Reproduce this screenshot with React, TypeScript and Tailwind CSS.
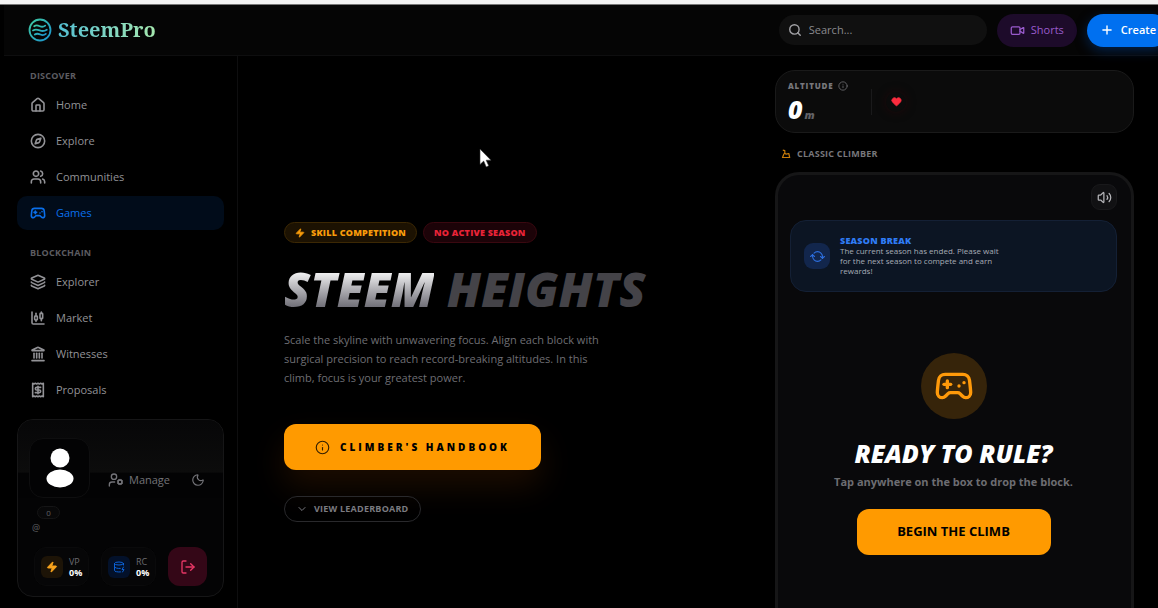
import React from "react";
import {
  House, Compass, Users, Gamepad2, Layers, ChartCandlestick, Landmark, Receipt,
  Search, Video, Plus, Info, Heart, Volume2, RefreshCcw, Zap, ChevronDown,
  UserCog, Moon, DatabaseZap, LogOut, type LucideIcon,
} from "lucide-react";

type Item = { label: string; icon: LucideIcon; active?: boolean };

const discover: Item[] = [
  { label: "Home", icon: House },
  { label: "Explore", icon: Compass },
  { label: "Communities", icon: Users },
  { label: "Games", icon: Gamepad2, active: true },
];

const blockchain: Item[] = [
  { label: "Explorer", icon: Layers },
  { label: "Market", icon: ChartCandlestick },
  { label: "Witnesses", icon: Landmark },
  { label: "Proposals", icon: Receipt },
];

function NavGroup({ title, items }: { title: string; items: Item[] }) {
  return (
    <section>
      <h2 className="px-[13px] text-[9px] font-bold leading-3 tracking-wide text-[#5c5c60]">{title}</h2>
      <ul className="mt-[6px] flex flex-col gap-[2px]">
        {items.map(({ label, icon: Icon, active }) => (
          <li key={label}>
            <a
              href="#"
              className={`flex h-[34px] items-center gap-[10px] rounded-[10px] px-[13px] text-[11px] font-medium ${active ? "bg-[#010c1a] text-[#0a6fea]" : "text-[#929296]"}`}
            >
              <Icon size={16} strokeWidth={2.4} />
              {label}
            </a>
          </li>
        ))}
      </ul>
    </section>
  );
}

function Logo() {
  return (
    <a href="#" className="flex items-center gap-[6px]">
      <svg width="24" height="24" viewBox="0 0 24 24" fill="none" strokeWidth="1.8" strokeLinecap="round" aria-hidden="true">
        <defs>
          <linearGradient id="mark" x1="0" y1="0" x2="1" y2="1">
            <stop offset="0" stopColor="#3fc9a0" />
            <stop offset="1" stopColor="#1b93d0" />
          </linearGradient>
        </defs>
        <g stroke="url(#mark)">
          <circle cx="12" cy="12" r="10.5" />
          <path d="M6.200 8.200c2.200-1.500 3.800-.8 5.600 0s3.600.9 5.400-.6M5 12.400c2.500-1.600 4.500-.9 6.700 0s4.700.9 7.100-.7M6.800 16.500c2.200-1.500 3.800-.8 5.600 0s3.600.9 5.400-.6" />
        </g>
      </svg>
      <span className="bg-gradient-to-r from-[#52bfd2] to-[#a5e8ae] bg-clip-text font-['Noto_Serif','Liberation_Serif',serif] text-[20px] font-bold leading-7 text-transparent">
        SteemPro
      </span>
    </a>
  );
}

function Stat({ label, icon, tint }: { label: string; icon: React.ReactNode; tint: string }) {
  return (
    <div className="flex h-[39px] items-center gap-[6px] rounded-xl border border-[#0a0a0b] bg-[#060607] px-[6px]">
      <span className={`flex size-[22px] items-center justify-center rounded-md ${tint}`}>{icon}</span>
      <span className="flex flex-col text-[9px] leading-[11px]">
        <span className="text-[#6b6b70]">{label}</span>
        <b className="text-white">0%</b>
      </span>
    </div>
  );
}

function UserCard() {
  return (
    <section className="mt-3 overflow-hidden rounded-[16px] border border-[#161617] bg-[#040405]">
      <div className="flex h-[78px] items-end bg-linear-to-b from-[#070708] from-0% via-[#0c0c0c] via-67% to-[#030304] to-68% px-[11px]">
        <div className="flex h-[60px] w-[61px] items-center justify-center rounded-[14px] border border-[#0e0e0f] bg-[#030304]">
          <svg width="28" height="40" viewBox="0 0 28 40" fill="white" aria-label="Avatar">
            <circle cx="14" cy="10" r="9.500" />
            <ellipse cx="14" cy="30.500" rx="13.500" ry="9" />
          </svg>
        </div>
        <div className="flex flex-1 items-center justify-between pb-[10px] pl-[18px] pr-[7px] text-[#737378]">
          <button className="flex items-center gap-[5px] text-[11px] leading-4"><UserCog size={16} />Manage</button>
          <button aria-label="Dark mode"><Moon size={14} /></button>
        </div>
      </div>
      <div className="px-[14px] pt-[8px] text-[9px] text-[#606064]">
        <span className="ml-[5px] flex h-[13px] w-[23px] items-center justify-center rounded-full border border-[#151516] bg-[#080809] text-[8px]">0</span>
        <span className="mt-[3px] block leading-3">@</span>
      </div>
      <div className="mb-[10px] mt-[13px] flex items-center justify-between px-[16px]">
        <Stat label="VP" tint="bg-[#1d1407] text-[#f6a21c]" icon={<Zap size={12} fill="currentColor" />} />
        <Stat label="RC" tint="bg-[#03112a] text-[#0c62d8]" icon={<DatabaseZap size={12} />} />
        <button aria-label="Log out" className="flex size-[39px] items-center justify-center rounded-xl bg-[#340717] text-[#e83766]"><LogOut size={16} /></button>
      </div>
    </section>
  );
}

function Header() {
  return (
    <header className="flex h-[51px] items-center justify-between border-b border-[#0e0e0f] bg-[#050505] pl-6">
      <Logo />
      <div className="-mr-[11px] flex shrink-0 items-center gap-[10px]">
        <label className="flex h-[30px] w-[208px] items-center gap-[7px] rounded-full bg-[#101010] px-[9px] text-[#a2a2a6]">
          <Search size={14} strokeWidth={2.400} className="shrink-0" />
          <input aria-label="Search" placeholder="Search..." className="w-full bg-transparent text-[11px] outline-none placeholder:text-[#8a8a8e]" />
        </label>
        <button className="flex h-[33px] items-center gap-[6px] rounded-full bg-[#1d0b2a] px-[13px] text-[11px] font-medium text-[#9a5bcd]"><Video size={15} />Shorts</button>
        <button className="flex h-[33px] items-center gap-[7px] rounded-full bg-[#0070f0] px-[13px] text-[11px] font-semibold text-white shadow-[0_4px_12px_#00337599]"><Plus size={14} strokeWidth={2.400} />Create</button>
      </div>
    </header>
  );
}

function Hero() {
  return (
    <main className="flex flex-1 flex-col items-start pl-[46px] pt-[166px]">
      <div className="flex gap-[6px] text-[9px] font-extrabold tracking-wide">
        <span className="flex h-[21px] items-center gap-[6px] rounded-full border border-[#3c2804] bg-[#1c1202] px-[10px] text-[#f99c0b]"><Zap size={10} fill="currentColor" />SKILL COMPETITION</span>
        <span className="flex h-[21px] items-center rounded-full border border-[#3a0810] bg-[#1c0308] px-[10px] text-[#ea2438]">NO ACTIVE SEASON</span>
      </div>
      <h1 className="mt-[19px] whitespace-nowrap text-5xl font-black italic leading-[54px] text-[#444348]">
        <span className="bg-gradient-to-b from-white from-20% to-[#62616a] to-85% bg-clip-text text-transparent">STEEM</span>{" "}
        <span>HEIGHTS</span>
      </h1>
      <p className="mt-[14px] max-w-[325px] text-[11px] leading-[19px] text-[#6e6e73]">
        Scale the skyline with unwavering focus. Align each block with surgical precision to reach record-breaking altitudes. In this climb, focus is your greatest power.
      </p>
      <button className="mt-[37px] flex h-[46px] w-[257px] items-center justify-center gap-[10px] rounded-xl bg-[#ff9a00] text-[10px] font-black tracking-[3px] text-black shadow-[0_16px_32px_#3a1a0080]">
        <Info size={15} strokeWidth={1.800} className="opacity-80" />CLIMBER&apos;S HANDBOOK
      </button>
      <button className="mt-[26px] flex h-[26px] items-center gap-[6px] rounded-full border border-[#29292c] px-[11px] text-[9px] font-bold tracking-wide text-[#7b7b80]">
        <ChevronDown size={12} />VIEW LEADERBOARD
      </button>
    </main>
  );
}

function GamePanel() {
  return (
    <aside className="mr-[24px] flex w-[359px] shrink-0 flex-col pt-[14px]">
      <section className="flex h-[63px] items-center rounded-[20px] border border-[#1a1a1a] bg-[#0b0b0b] pl-[12px]">
        <div className="flex h-full w-[83px] flex-col pt-[9px]">
          <div className="flex items-center gap-[5px] text-[8px] font-extrabold leading-3 tracking-widest text-[#77777b]">ALTITUDE<Info size={10} strokeWidth={1.800} /></div>
          <div className="flex items-baseline gap-[2px] font-black italic">
            <span className="text-[25px] leading-[34px] text-white">0</span>
            <span className="text-[11px] text-[#626267]">m</span>
          </div>
        </div>
        <div className="h-[26px] w-px bg-[#1a1a1b]" />
        <span className="ml-[14px] flex size-[20px] items-center justify-center rounded-full text-[#fb2c3e] shadow-[0_0_10px_#30060a80]"><Heart size={11} fill="currentColor" /></span>
      </section>
      <h2 className="mt-[15px] flex items-center gap-[6px] pl-[6px] text-[9px] font-bold leading-3 tracking-wide text-[#77777b]">
        <svg width="10" height="10" viewBox="0 0 10 10" fill="none" stroke="#c97c0a" strokeWidth="1.200" strokeLinejoin="round" aria-hidden="true">
          <path d="M1.500 8.500h7.200L7.800 4.500 5.200 5.200 3.800 4.200 2.800 5.200zM1.800 1.200l2 .4v2.600" />
        </svg>
        CLASSIC CLIMBER
      </h2>
      <section className="mt-[12px] flex flex-1 flex-col rounded-t-[24px] border-[3px] border-b-0 border-[#161617] bg-[#09090b] pl-[12px] pr-[14px] pt-[9px]">
        <button aria-label="Sound" className="flex size-[26px] items-center justify-center self-end rounded-[9px] border border-[#19191b] bg-[#111113] text-[#b5b5b9]"><Volume2 size={15} /></button>
        <div className="mt-[10px] flex h-[72px] items-center gap-[10px] rounded-[16px] border border-[#142035] bg-[#0c1523] px-[13px]">
          <span className="flex size-[26px] items-center justify-center rounded-[9px] bg-[#12264c] text-[#2d6fdf]"><RefreshCcw size={13} className="-scale-x-100 rotate-45" /></span>
          <div className="max-w-[170px]">
            <h3 className="text-[9px] font-extrabold leading-[10px] tracking-wide text-[#2f7cf5]">SEASON BREAK</h3>
            <p className="text-[8px] leading-[10px] text-[#a6abb5]">The current season has ended. Please wait for the next season to compete and earn rewards!</p>
          </div>
        </div>
        <div className="mt-[61px] flex flex-col items-center">
          <div className="flex size-[66px] items-center justify-center rounded-full bg-[#36240a] text-[#ff9a0a]"><Gamepad2 size={40} /></div>
          <h2 className="mt-[18px] text-[25px] font-black italic leading-8 text-white">READY TO RULE?</h2>
          <p className="mt-[5px] text-[11px] font-bold leading-4 text-[#6d6d72]">Tap anywhere on the box to drop the block.</p>
          <button className="mt-[19px] h-[46px] w-[194px] rounded-xl bg-[#ff9a00] text-[13px] font-bold text-black">BEGIN THE CLIMB</button>
        </div>
      </section>
    </aside>
  );
}

export default function App() {
  return (
    <div className="relative flex h-screen min-h-[608px] flex-col overflow-hidden bg-black pl-1 font-['Open_Sans','Noto_Sans',sans-serif]">
      <div className="-ml-1 h-[5px] shrink-0 border-b border-[#777] bg-[#f3f3f3]" />
      <Header />
      <div className="flex min-h-0 flex-1">
        <nav className="w-[234px] shrink-0 border-r border-[#0e0e0f] px-[13px] pt-[14px]">
          <NavGroup title="DISCOVER" items={discover} />
          <div className="h-[17px]" />
          <NavGroup title="BLOCKCHAIN" items={blockchain} />
          <UserCard />
        </nav>
        <Hero />
        <GamePanel />
      </div>
      <svg className="absolute left-[479px] top-[148px]" width="13" height="20" viewBox="0 0 13 20" fill="white" stroke="#333" strokeWidth=".6" aria-hidden="true">
        <path d="M1 1v15.500l3.700-3.400 2.500 5.800 2.500-1.100-2.500-5.600h4.800z" />
      </svg>
    </div>
  );
}
